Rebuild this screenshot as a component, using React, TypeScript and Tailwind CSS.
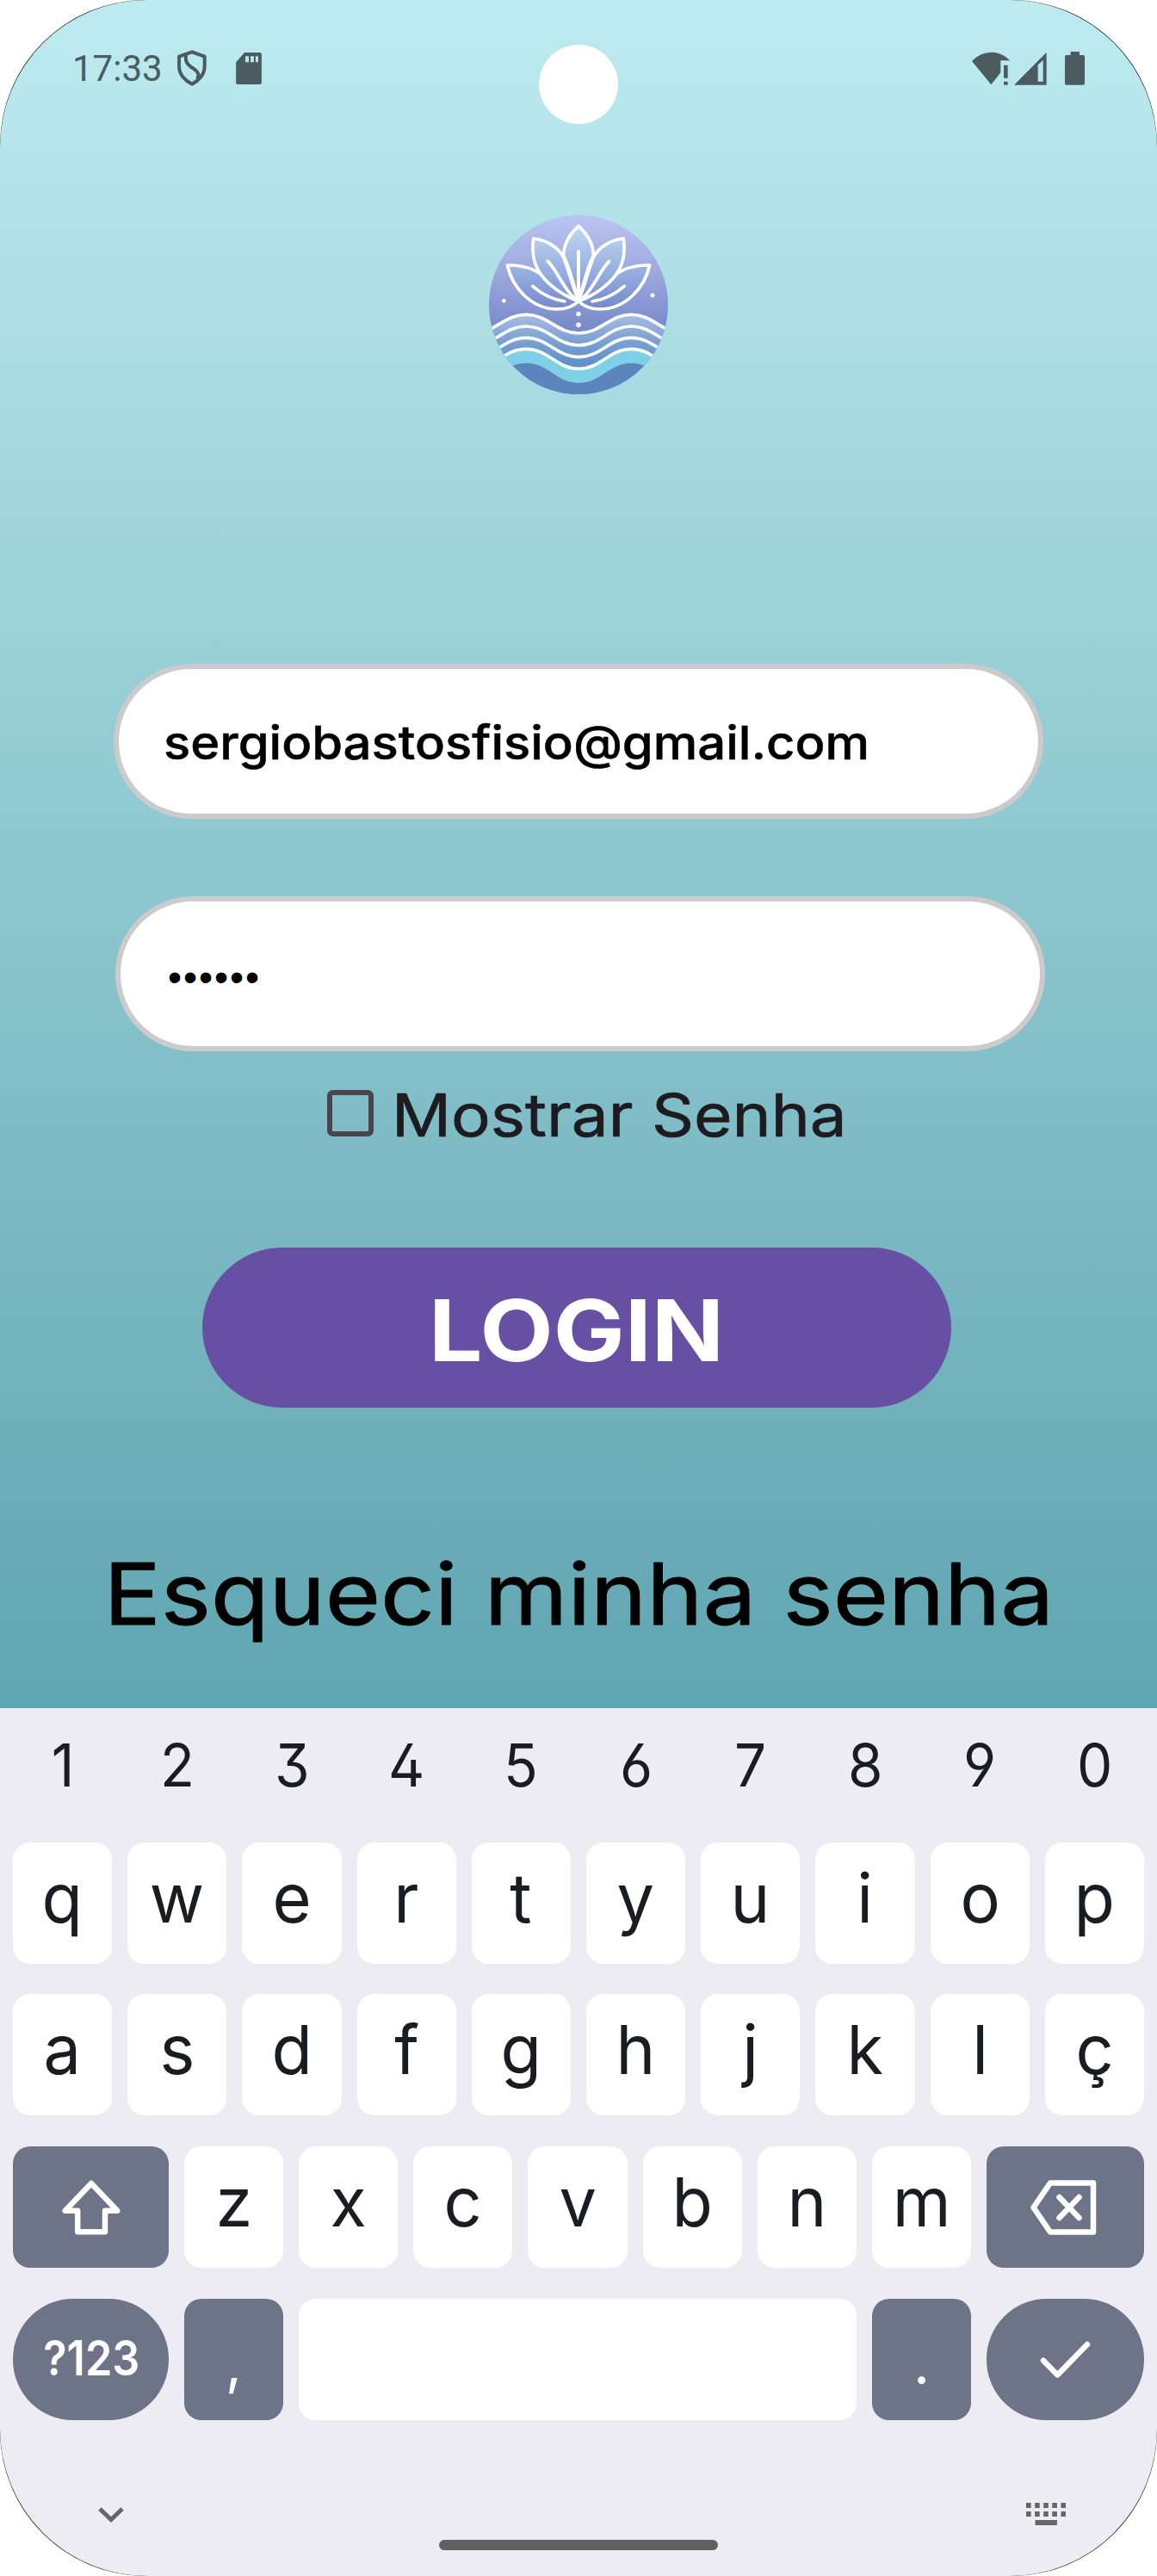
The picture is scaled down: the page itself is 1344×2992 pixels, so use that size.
import type { ReactNode } from "react";

const wave = (p: number, t: number) =>
  `M-1 ${t}C76 ${t} 106 ${p} 183 ${p}C260 ${p} 290 ${t} 367 ${t}C444 ${t} 474 ${p} 550 ${p}C627 ${p} 657 ${t} 733 ${t}`;

const sidePetals = (
  <>
    <path d="M118 233C165 232 210 245 240 268C270 302 310 338 366 358C350 375 325 386 290 386C200 385 135 310 118 233Z" />
    <path d="M209 140C255 145 295 170 314 206C330 245 345 305 366 358C310 338 262 302 237 268C208 230 202 190 209 140Z" />
    <path d="M259 219C292 252 312 312 350 346" fill="none" />
    <path d="M206 306C240 335 275 353 318 359" fill="none" />
  </>
);

function LotusLogo() {
  return (
    <svg viewBox="54 59 624 624" className="h-[208px] w-[208px]">
      <defs>
        <clipPath id="disc"><circle cx="366" cy="371" r="312" /></clipPath>
        <linearGradient id="sky" x1="0" y1="0" x2="0" y2="1">
          <stop offset="0" stopColor="#bac5f1" />
          <stop offset="0.35" stopColor="#9aa5dc" />
          <stop offset="0.66" stopColor="#7488c8" />
        </linearGradient>
        <linearGradient id="petal" gradientUnits="userSpaceOnUse" x1="0" y1="95" x2="0" y2="385">
          <stop offset="0" stopColor="#c3d8f3" />
          <stop offset="0.5" stopColor="#9bb3e2" />
          <stop offset="1" stopColor="#7389cd" />
        </linearGradient>
        <linearGradient id="sea" gradientUnits="userSpaceOnUse" x1="0" y1="405" x2="0" y2="590">
          <stop offset="0" stopColor="#a9bbe3" />
          <stop offset="0.5" stopColor="#7ba1d2" />
          <stop offset="1" stopColor="#5c8ec6" />
        </linearGradient>
      </defs>
      <g clipPath="url(#disc)">
        <rect x="54" y="59" width="624" height="624" fill="url(#sky)" />
        <path d={wave(405, 470) + "V700H-1Z"} fill="url(#sea)" />
        <path d={wave(525, 594) + "V700H-1Z"} fill="#7dd0e8" />
        <path d={wave(574, 643) + "V700H-1Z"} fill="#5d85bd" />
        <g fill="none" stroke="#fafdff" strokeWidth="11">
          <path d={wave(405, 470)} />
          <path d={wave(446, 512)} />
          <path d={wave(486, 553)} />
          <path d={wave(525, 594)} />
        </g>
      </g>
      <g fill="url(#petal)" stroke="#fff" strokeWidth="11" strokeLinejoin="round" strokeLinecap="round">
        {sidePetals}
        <g transform="translate(732 0) scale(-1 1)">{sidePetals}</g>
        <path d="M366 97C335 125 314 160 314 200C338 245 347 300 366 358C385 300 394 245 418 200C418 160 397 125 366 97Z" />
        <path d="M366 185V350" strokeWidth="12" />
      </g>
      <g fill="#fff">
        <circle cx="106" cy="357" r="7" />
        <circle cx="624" cy="338" r="7.5" />
        <circle cx="366" cy="403" r="8" />
        <circle cx="366" cy="441" r="8.5" />
      </g>
    </svg>
  );
}

function StatusBar() {
  return (
    <div className="relative flex h-[158px] w-full items-center pr-[84px] pl-[84px] text-[#4a5c60]">
      <span className="mt-0.5 w-[122px] font-['Roboto',sans-serif] text-[42px] leading-none">17:33</span>
      <svg viewBox="30 26 102 126" className="h-[42px] w-[34px]" fill="none" stroke="currentColor" strokeWidth="12" strokeLinejoin="round">
        <path d="M81 33L125 49V82C125 112 104 134 81 145C58 134 36 112 36 82V49Z" />
        <path d="M60 43C56 72 70 80 86 91C104 103 108 114 99 128" />
      </svg>
      <svg viewBox="234 32 90 112" className="ml-[34px] h-[37px] w-[30px]" fill="currentColor" fillRule="evenodd">
        <path d="M264 32H318Q324 32 324 38V138Q324 144 318 144H240Q234 144 234 138V66ZM267 45V66H279V45ZM285 45V66H297V45ZM303 45V66H312V45Z" />
      </svg>
      <div className="absolute top-[52px] left-[626px] h-[92px] w-[92px] rounded-full bg-white" />
      <svg viewBox="387 177 393 117" className="ml-auto h-[39px] w-[131px]" fill="currentColor" fillRule="evenodd">
        <path d="M387 210Q417 179 454 179Q492 179 520 208H487V250L454 292Z" />
        <path d="M498 224H512V269H498ZM498 281H512V293H498Z" />
        <path d="M534 293L647 179V293ZM617 223V281H635V207Z" />
        <path d="M731 177H762V189H774Q780 189 780 195V287Q780 293 774 293H717Q711 293 711 287V195Q711 189 717 189H731Z" />
      </svg>
    </div>
  );
}

function Field({ children, className }: { children: ReactNode; className: string }) {
  return (
    <div className={"flex h-[180px] w-[1080px] items-center rounded-[90px] border-[6px] border-[#cccbcc] bg-white pl-[52px] text-black " + className}>
      {children}
    </div>
  );
}

const keyBase = "flex h-[141px] items-center justify-center";

function LetterKey({ label }: { label: string }) {
  return (
    <div className={keyBase + " min-w-0 flex-1 rounded-[20px] bg-white pb-3 text-[79px] leading-none text-[#1b1c21]"}>
      <span className="inline-block scale-x-[0.98]">{label}</span>
    </div>
  );
}

function DarkKey({ children, className }: { children: ReactNode; className: string }) {
  return <div className={keyBase + " shrink-0 bg-[#6e7488] text-white " + className}>{children}</div>;
}

function Keyboard() {
  return (
    <div className="flex h-[1008px] flex-col bg-[#edecf3] px-[15px] font-['Inter',sans-serif]">
      <div className="flex h-[132px] gap-[18px]">
        {"1234567890".split("").map((d) => (
          <div key={d} className="flex flex-1 items-center justify-center text-[69px] leading-none text-[#1b1c21] [font-feature-settings:'ss01']">
            <span className="inline-block scale-x-[0.95]">{d}</span>
          </div>
        ))}
      </div>
      <div className="mt-6 flex flex-col gap-9">
        <div className="-mb-px flex gap-[18px]">{"qwertyuiop".split("").map((c) => <LetterKey key={c} label={c} />)}</div>
        <div className="flex gap-[18px]">{"asdfghjklç".split("").map((c) => <LetterKey key={c} label={c} />)}</div>
        <div className="flex gap-[18px]">
          <DarkKey className="w-[181px] rounded-[20px]">
            <svg viewBox="0 0 70 68" className="h-[68px] w-[70px]" fill="none" stroke="currentColor" strokeWidth="6.5" strokeLinejoin="round">
              <path d="M35 6L4.7 37.8H19.2V62.3H51V37.8H65.3Z" />
            </svg>
          </DarkKey>
          {"zxcvbnm".split("").map((c) => <LetterKey key={c} label={c} />)}
          <DarkKey className="w-[183px] rounded-[20px]">
            <svg viewBox="0 0 80 68" className="h-[68px] w-[80px]" fill="none" stroke="currentColor" strokeWidth="6.5" strokeLinejoin="round" strokeLinecap="round">
              <path d="M3.5 34L23 5.5H73V62.5H23Z" />
              <path d="M33.5 22L56.5 46M56.5 22L33.5 46" />
            </svg>
          </DarkKey>
        </div>
        <div className="flex gap-[18px]">
          <DarkKey className="w-[181px] rounded-[70px] pb-1">
            <span className="ml-0.5 inline-block scale-x-[0.9] text-[56px] leading-none font-semibold">?123</span>
          </DarkKey>
          <DarkKey className="w-[115px] rounded-[20px] pt-2">
            <span className="text-[66px] leading-none">,</span>
          </DarkKey>
          <div className="h-[141px] flex-1 rounded-[20px] bg-white" />
          <DarkKey className="w-[115px] rounded-[20px] pt-2">
            <span className="text-[66px] leading-none">.</span>
          </DarkKey>
          <DarkKey className="w-[183px] rounded-[70px]">
            <svg viewBox="0 0 60 44" className="h-[44px] w-[60px]" fill="none" stroke="currentColor" strokeWidth="6.5" strokeLinejoin="round" strokeLinecap="round">
              <path d="M4 22.7L20.4 39.5L55 4" />
            </svg>
          </DarkKey>
        </div>
      </div>
      <div className="mt-[95px] flex h-[60px] justify-between pr-[91px] pl-[99px] text-[#666]">
        <svg viewBox="0 0 30 18" className="mt-1.5 h-[18px] w-[30px]" fill="none" stroke="currentColor" strokeWidth="5">
          <path d="M2 2L15 14.5L28 2" />
        </svg>
        <div className="mt-[44px] ml-2 h-[12px] w-[324px] rounded-[6px] bg-[#606061]" />
        <svg viewBox="0 0 46 26" className="mt-px h-[26px] w-[46px]" fill="currentColor">
          {[0, 1, 2, 3, 4].map((i) => (
            <g key={i}>
              <rect x={i * 10.1} y="0" width="5.6" height="6" />
              <rect x={i * 10.1} y="10" width="5.6" height="6" />
            </g>
          ))}
          <rect x="10.5" y="20" width="25.4" height="6" />
        </svg>
      </div>
    </div>
  );
}

export default function App() {
  return (
    <div className="h-[2992px] w-[1344px] overflow-hidden bg-white">
      <div className="h-full rounded-[169px] bg-[#222c2e]">
        <div className="h-full overflow-hidden rounded-[171px]">
          <div className="flex h-[1984px] flex-col items-center bg-linear-to-b from-[#bdebf0] to-[#5fa5b0] font-['Inter',sans-serif]">
            <StatusBar />
            <div className="mt-[92px]"><LotusLogo /></div>
            <Field className="mt-[313px]">
              <span className="mt-[3px] inline-block origin-left scale-x-[1.074] text-[54px] leading-none font-medium [-webkit-text-stroke:0.5px]">sergiobastosfisio@gmail.com</span>
            </Field>
            <Field className="mt-[90px] translate-x-[2px]">
              <span className="mt-[7px] ml-[3px] font-['Liberation_Sans',sans-serif] text-[46px] leading-none tracking-[1.9px]">••••••</span>
            </Field>
            <div className="mt-[45px] ml-[380px] flex h-[54px] w-[600px] items-center self-start">
              <div className="h-[54px] w-[54px] rounded-[7px] border-[6px] border-[#49454f]" />
              <span className="mt-[5px] ml-[21px] inline-block origin-left scale-x-[1.107] text-[69px] leading-none font-normal whitespace-nowrap text-[#1d1b20] [-webkit-text-stroke:0.7px]">Mostrar Senha</span>
            </div>
            <div className="mt-[129px] mr-1 flex h-[186px] w-[870px] items-center justify-center rounded-[93px] bg-[#6750a3] pt-1.5 text-white">
              <span className="inline-block scale-x-[1.117] text-[99px] leading-none font-bold">LOGIN</span>
            </div>
            <div className="mt-[156px] flex h-[120px] items-center text-black">
              <span className="inline-block scale-x-[1.114] text-[99px] leading-none font-normal whitespace-nowrap [-webkit-text-stroke:1px]">Esqueci minha senha</span>
            </div>
          </div>
          <Keyboard />
        </div>
      </div>
    </div>
  );
}
